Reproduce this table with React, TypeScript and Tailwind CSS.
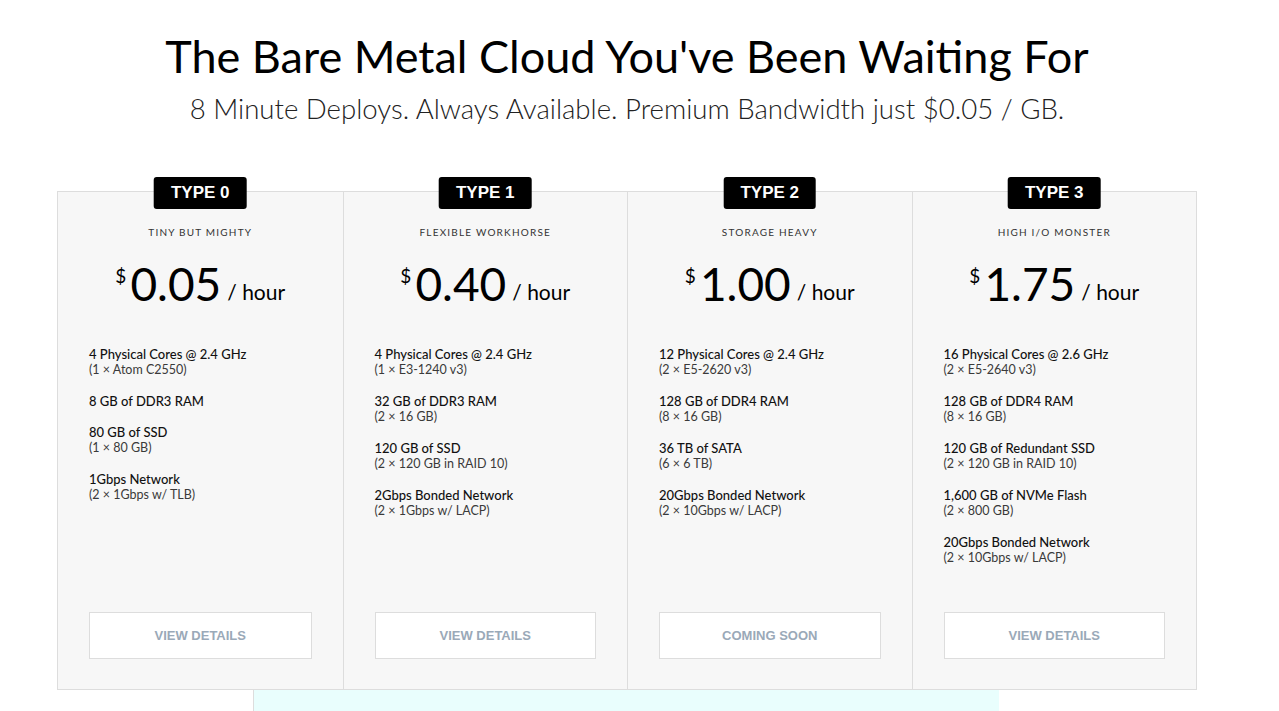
const plans = [
  {
    type: "TYPE 0",
    tagline: "TINY BUT MIGHTY",
    price: "0.05",
    button: "VIEW DETAILS",
    specs: [
      ["4 Physical Cores @ 2.4 GHz", "(1 × Atom C2550)"],
      ["8 GB of DDR3 RAM", ""],
      ["80 GB of SSD", "(1 × 80 GB)"],
      ["1Gbps Network", "(2 × 1Gbps w/ TLB)"],
    ],
  },
  {
    type: "TYPE 1",
    tagline: "FLEXIBLE WORKHORSE",
    price: "0.40",
    button: "VIEW DETAILS",
    specs: [
      ["4 Physical Cores @ 2.4 GHz", "(1 × E3-1240 v3)"],
      ["32 GB of DDR3 RAM", "(2 × 16 GB)"],
      ["120 GB of SSD", "(2 × 120 GB in RAID 10)"],
      ["2Gbps Bonded Network", "(2 × 1Gbps w/ LACP)"],
    ],
  },
  {
    type: "TYPE 2",
    tagline: "STORAGE HEAVY",
    price: "1.00",
    button: "COMING SOON",
    specs: [
      ["12 Physical Cores @ 2.4 GHz", "(2 × E5-2620 v3)"],
      ["128 GB of DDR4 RAM", "(8 × 16 GB)"],
      ["36 TB of SATA", "(6 × 6 TB)"],
      ["20Gbps Bonded Network", "(2 × 10Gbps w/ LACP)"],
    ],
  },
  {
    type: "TYPE 3",
    tagline: "HIGH I/O MONSTER",
    price: "1.75",
    button: "VIEW DETAILS",
    specs: [
      ["16 Physical Cores @ 2.6 GHz", "(2 × E5-2640 v3)"],
      ["128 GB of DDR4 RAM", "(8 × 16 GB)"],
      ["120 GB of Redundant SSD", "(2 × 120 GB in RAID 10)"],
      ["1,600 GB of NVMe Flash", "(2 × 800 GB)"],
      ["20Gbps Bonded Network", "(2 × 10Gbps w/ LACP)"],
    ],
  },
];

const PlanCard = ({ plan, first }: { plan: (typeof plans)[number]; first: boolean }) => {
  return (
    <div
      className={`relative flex flex-col px-[31px] pb-[30px] pt-[33px] ${
        first ? "" : "border-l border-[#dddddd]"
      }`}
    >
      <div className="absolute left-1/2 top-[-15px] -translate-x-1/2 rounded-[3px] bg-black px-[17px] h-[32px] flex items-center font-['Liberation_Sans',Arial,sans-serif] text-[17px] font-bold text-white">
        {plan.type}
      </div>
      <div className="text-center text-[10px] tracking-[0.12em] text-[#333]">
        {plan.tagline}
      </div>
      <div className="mt-[21px] flex items-start justify-center text-black">
        <span className="mt-[5px] mr-[4px] text-[19px] leading-none">$</span>
        <span className="text-[46px] leading-none">{plan.price}</span>
        <span className="ml-[6px] mt-[20px] text-[21px] leading-none">/ hour</span>
      </div>
      <div className="mt-[39px] flex flex-col gap-[15px]">
        {plan.specs.map(([main, sub]) => (
          <div key={main} className="leading-[16px]">
            <div className="text-[13px] font-medium text-[#111]">{main}</div>
            {sub && <div className="text-[12.5px] text-[#3a3a3a]">{sub}</div>}
          </div>
        ))}
      </div>
      <button
        type="button"
        className="mt-auto h-[47px] w-full border border-[#dddddd] bg-white font-['Liberation_Sans',Arial,sans-serif] text-[13px] font-bold text-[#9aa9b8]"
      >
        {plan.button}
      </button>
    </div>
  );
};

const App = () => {
  return (
    <div className="min-h-[711px] bg-white font-['Lato','Open_Sans',sans-serif] text-black">
      <div className="ml-[57px] w-[1140px] pt-[32px]">
        <h1 className="text-center text-[45px] font-normal leading-[48px]">
          The Bare Metal Cloud You've Been Waiting For
        </h1>
        <p className="mt-[12px] text-center text-[27.6px] font-light leading-[34px] text-[#222]">
          8 Minute Deploys. Always Available. Premium Bandwidth just $0.05 / GB.
        </p>
        <div className="mt-[65px] grid h-[499px] grid-cols-4 border border-[#dddddd] bg-[#f7f7f7]">
          {plans.map((p, i) => (
            <PlanCard key={p.type} plan={p} first={i === 0} />
          ))}
        </div>
        <div className="ml-[196px] h-[30px] w-[746px] border-l border-[#dddddd] bg-[#e9fefd]" />
      </div>
    </div>
  );
};

export default App;
